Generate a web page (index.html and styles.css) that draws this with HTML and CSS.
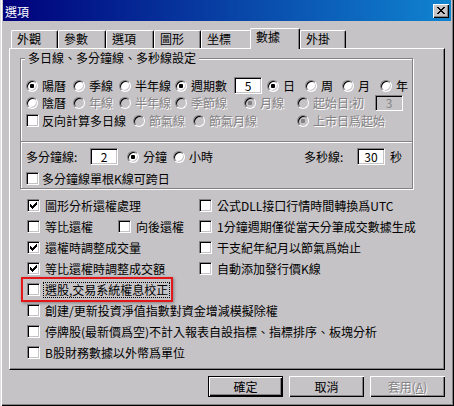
FILE: index.html
```html
<!DOCTYPE html>
<html lang="zh-Hant">
<head>
    <meta charset="UTF-8">
    <meta name="viewport" content="width=device-width, initial-scale=1.0">
    <title>選項</title>
    <link rel="stylesheet" href="styles.css">
</head>
<body>

<div class="window">
    <!-- 標題列 -->
    <div class="titlebar">
        <span class="title">選項</span>
        <span class="close">
            <svg width="8" height="7" viewBox="0 0 8 7" shape-rendering="crispEdges"><path d="M0 0h2v1H0zM6 0h2v1H6zM1 1h2v1H1zM5 1h2v1H5zM2 2h4v1H2zM3 3h2v1H3zM2 4h4v1H2zM1 5h2v1H1zM5 5h2v1H5zM0 6h2v1H0zM6 6h2v1H6z" fill="#000"/></svg>
        </span>
    </div>

    <!-- 分頁標籤 -->
    <div class="tabs">
        <div class="tab tab-a">外觀</div>
        <div class="tab tab-b">參數</div>
        <div class="tab tab-b">選項</div>
        <div class="tab tab-a">圖形</div>
        <div class="tab tab-c">坐標</div>
        <div class="tab active">數據</div>
        <div class="tab tab-d">外掛</div>
    </div>

    <div class="panel">
        <!-- 多日線、多分鐘線、多秒線設定 -->
        <div class="group">
            <div class="group-title">多日線、多分鐘線、多秒線設定</div>

            <div class="grow r1">
                <span class="opt"><i class="radio on"></i>陽曆</span>
                <span class="opt"><i class="radio"></i>季線</span>
                <span class="opt"><i class="radio"></i>半年線</span>
                <span class="opt"><i class="radio on"></i>週期數<span class="field period">5</span></span>
                <span class="opt"><i class="radio on"></i>日</span>
                <span class="opt"><i class="radio"></i>周</span>
                <span class="opt"><i class="radio"></i>月</span>
                <span class="opt"><i class="radio"></i>年</span>
            </div>

            <div class="grow r2">
                <span class="opt"><i class="radio"></i>陰曆</span>
                <span class="opt dis"><i class="radio"></i>年線</span>
                <span class="opt dis"><i class="radio"></i>半年線</span>
                <span class="opt dis"><i class="radio"></i>季節線</span>
                <span class="opt dis"><i class="radio on"></i>月線</span>
                <span class="opt dis"><i class="radio"></i>起始日:初</span>
                <span class="field off">3</span>
            </div>

            <div class="grow r3">
                <span class="opt"><i class="check"></i>反向計算多日線</span>
                <span class="opt dis"><i class="radio"></i>節氣線</span>
                <span class="opt dis"><i class="radio"></i>節氣月線</span>
                <span class="opt dis"><i class="radio on"></i>上市日爲起始</span>
            </div>

            <div class="sep"></div>

            <div class="grow r4">
                <span>多分鐘線:</span>
                <span class="field">2</span>
                <span class="opt"><i class="radio on"></i>分鐘</span>
                <span class="opt"><i class="radio"></i>小時</span>
                <span>多秒線:</span>
                <span class="field">30</span>
                <span>秒</span>
            </div>

            <div class="grow r5">
                <span class="opt"><i class="check"></i>多分鐘線單根K線可跨日</span>
            </div>
        </div>

        <!-- 其他選項 -->
        <div class="list">
            <div class="lrow">
                <span class="opt"><i class="check"><svg width="7" height="7" viewBox="0 0 7 7" shape-rendering="crispEdges"><path d="M0 2h1v3H0zM1 3h1v3H1zM2 4h1v3H2zM3 3h1v3H3zM4 2h1v3H4zM5 1h1v3H5zM6 0h1v3H6z" fill="#000"/></svg></i>圖形分析還權處理</span>
                <span class="opt"><i class="check"></i>公式DLL接口行情時間轉換爲UTC</span>
            </div>
            <div class="lrow">
                <span class="pair">
                    <span class="opt"><i class="check"></i>等比還權</span>
                    <span class="opt"><i class="check"></i>向後還權</span>
                </span>
                <span class="opt"><i class="check"></i>1分鐘週期僅從當天分筆成交數據生成</span>
            </div>
            <div class="lrow">
                <span class="opt"><i class="check"><svg width="7" height="7" viewBox="0 0 7 7" shape-rendering="crispEdges"><path d="M0 2h1v3H0zM1 3h1v3H1zM2 4h1v3H2zM3 3h1v3H3zM4 2h1v3H4zM5 1h1v3H5zM6 0h1v3H6z" fill="#000"/></svg></i>還權時調整成交量</span>
                <span class="opt"><i class="check"></i>干支紀年紀月以節氣爲始止</span>
            </div>
            <div class="lrow">
                <span class="opt"><i class="check"><svg width="7" height="7" viewBox="0 0 7 7" shape-rendering="crispEdges"><path d="M0 2h1v3H0zM1 3h1v3H1zM2 4h1v3H2zM3 3h1v3H3zM4 2h1v3H4zM5 1h1v3H5zM6 0h1v3H6z" fill="#000"/></svg></i>等比還權時調整成交額</span>
                <span class="opt"><i class="check"></i>自動添加發行價K線</span>
            </div>
            <div class="lrow full marked">
                <span class="opt"><i class="check"></i><span class="focus">選股,交易系統權息校正</span></span>
                <span class="mark"></span>
            </div>
            <div class="lrow full">
                <span class="opt"><i class="check"></i>創建/更新投資淨值指數對資金增減模擬除權</span>
            </div>
            <div class="lrow full">
                <span class="opt"><i class="check"></i>停牌股(最新價爲空)不計入報表自設指標、指標排序、板塊分析</span>
            </div>
            <div class="lrow full">
                <span class="opt"><i class="check"></i>B股財務數據以外幣爲單位</span>
            </div>
        </div>
    </div>

    <!-- 按鈕 -->
    <div class="actions">
        <button class="btn default">確定</button>
        <button class="btn">取消</button>
        <button class="btn" disabled>套用(<u>A</u>)</button>
    </div>
</div>

</body>
</html>
```

FILE: styles.css
```css
body { margin: 0; background: #c6c3c6; font-family: "Noto Sans CJK TC", "Noto Sans", sans-serif; font-size: 12px; color: #000; }

/* 視窗外框 */
.window {
    width: 454px;
    height: 406px;
    box-sizing: border-box;
    padding: 0 3px 3px 3px;
    background: #c6c3c6;
    box-shadow: inset 1px 0 0 #dfdfdf, inset 2px 0 0 #fff, inset -1px -1px 0 #000, inset -2px -2px 0 #848284;
}

.titlebar {
    height: 21px;
    display: flex;
    align-items: center;
    justify-content: space-between;
    padding: 0 2px;
    background: linear-gradient(to right, #00007b, #1084d0);
    color: #fff;
}
.title { line-height: 12px; margin-top: 2px; }
.close {
    width: 16px;
    height: 14px;
    box-sizing: border-box;
    display: flex;
    align-items: center;
    justify-content: center;
    background: #c6c3c6;
    box-shadow: inset 1px 1px 0 #fff, inset -1px -1px 0 #000, inset -2px -2px 0 #848284;
}
.close svg { display: block; }

/* 分頁 */
.tabs { display: flex; align-items: flex-end; height: 20px; margin: 7px 0 0 8px; }
.tab {
    height: 18px;
    box-sizing: border-box;
    padding-left: 5px;
    line-height: 15px;
    border-top: 1px solid #fff;
    border-left: 1px solid #fff;
    border-right: 1px solid #000;
    border-radius: 2px 2px 0 0;
    box-shadow: inset -1px 0 0 #848284;
    background: #c6c3c6;
}
.tab-a { width: 47px; }
.tab-b { width: 48px; }
.tab-c { width: 51px; }
.tab-d { width: 46px; }
.tab.active {
    width: 50px;
    height: 21px;
    margin: 0 0 -1px -2px;
    position: relative;
    z-index: 1;
}

.panel {
    height: 322px;
    margin: 0 6px;
    box-sizing: border-box;
    border-top: 1px solid #fff;
    border-left: 1px solid #fff;
    border-right: 1px solid #000;
    border-bottom: 1px solid #000;
    box-shadow: inset -1px -1px 0 #848284;
    overflow: hidden;
}

/* 群組框 */
.group {
    width: 393px;
    height: 131px;
    margin: 9px 0 0 10px;
    box-sizing: border-box;
    border: 1px solid #848284;
    box-shadow: 1px 1px 0 #fff, inset 1px 1px 0 #fff;
}
.group-title {
    width: fit-content;
    margin: -7px 0 0 4px;
    padding: 0 3px;
    line-height: 12px;
    background: #c6c3c6;
}
.grow { display: grid; align-items: center; height: 17px; padding-left: 5px; }
.r1 { margin-top: 13px; grid-template-columns: 47px 46px 56px 92px 38px 37px 38px auto; }
.r2 { grid-template-columns: 47px 46px 56px 69px 53px 78px auto; }
.r3 { margin-top: 1px; grid-template-columns: 107px 60px 104px auto; }
.r4 { margin-top: 5px; grid-template-columns: 64px 37px 46px 131px 53px 33px auto; }
.r5 { margin-top: 5px; }
.sep { height: 1px; margin-top: 12px; background: #848284; border-bottom: 1px solid #fff; }

.opt { display: flex; align-items: center; white-space: nowrap; line-height: 12px; }
.dis { color: #848284; text-shadow: 1px 1px 0 #fff; }

/* 單選鈕 */
.radio {
    width: 12px;
    height: 12px;
    flex: none;
    box-sizing: border-box;
    margin-right: 4px;
    display: inline-flex;
    align-items: center;
    justify-content: center;
    border-radius: 50%;
    border: 1px solid;
    border-color: #848284 #fff #fff #848284;
    box-shadow: inset 1px 1px 0 #000, inset -1px -1px 0 #c6c3c6;
    background: #fff;
}
.radio.on::after { content: ""; width: 4px; height: 4px; border-radius: 1px; background: #000; }
.dis .radio { background: #c6c3c6; }
.dis .radio.on::after { background: #848284; }

/* 核取方塊 */
.check {
    width: 13px;
    height: 13px;
    flex: none;
    box-sizing: border-box;
    margin-right: 3px;
    display: inline-flex;
    align-items: center;
    justify-content: center;
    border: 1px solid;
    border-color: #848284 #fff #fff #848284;
    box-shadow: inset 1px 1px 0 #000, inset -1px -1px 0 #c6c3c6;
    background: #fff;
}
.check svg { display: block; }

/* 輸入框 */
.field {
    width: 28px;
    height: 17px;
    box-sizing: border-box;
    display: inline-flex;
    align-items: center;
    justify-content: center;
    line-height: 12px;
    border: 1px solid;
    border-color: #848284 #fff #fff #848284;
    box-shadow: inset 1px 1px 0 #000, inset -1px -1px 0 #c6c3c6;
    background: #fff;
    color: #000;
    text-shadow: none;
}
.field.period { margin-left: 7px; }
.field.off { height: 16px; background: #c6c3c6; color: #848284; }

/* 下方選項列表 */
.list { margin-top: 6px; padding-left: 17px; }
.lrow { display: grid; grid-template-columns: 172px auto; align-items: center; height: 21px; }
.lrow.full { display: flex; }
.list .check { margin-right: 5px; }
.pair { display: grid; grid-template-columns: 91px auto; }

.marked { position: relative; }
.focus { margin-left: -2px; padding: 0 1px; line-height: 14px; border: 1px dotted #000; }
.mark {
    position: absolute;
    left: -6px;
    top: -2px;
    width: 152px;
    height: 25px;
    box-sizing: border-box;
    border: 2px solid #e3161a;
    box-shadow: 1px 1px 3px rgba(0, 0, 0, 0.35);
}

/* 按鈕 */
.actions { display: flex; justify-content: flex-end; gap: 6px; margin: 6px 6px 0 0; }
.btn {
    width: 75px;
    height: 21px;
    padding: 0;
    border: none;
    font: inherit;
    line-height: 12px;
    background: #c6c3c6;
    color: #000;
    box-shadow: inset 1px 1px 0 #fff, inset -1px -1px 0 #000, inset -2px -2px 0 #848284;
}
.btn.default { border: 1px solid #000; }
.btn:disabled { color: #848284; text-shadow: 1px 1px 0 #fff; }
```
